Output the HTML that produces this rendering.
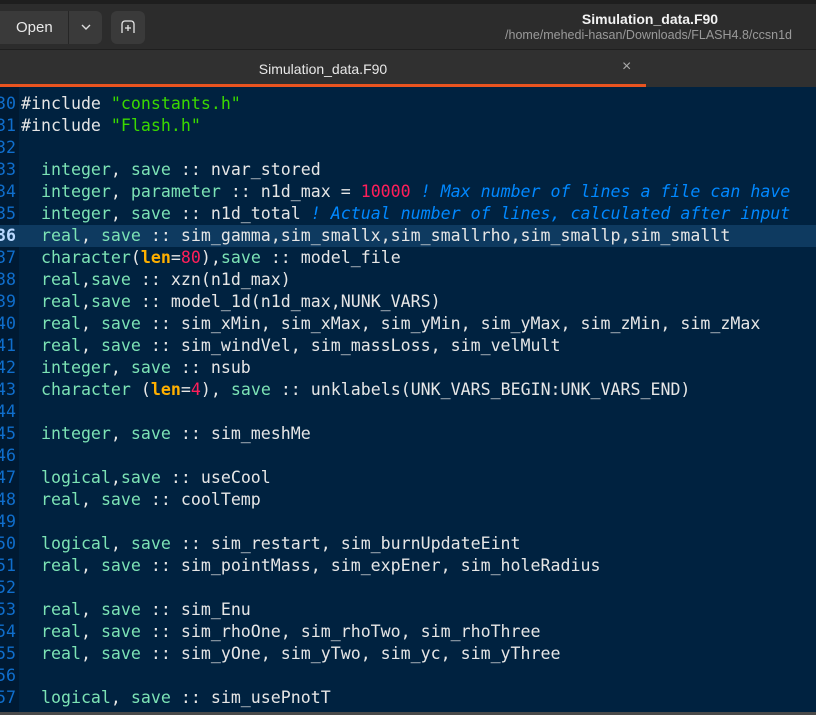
<!DOCTYPE html>
<html><head><meta charset="utf-8"><style>
*{margin:0;padding:0;box-sizing:border-box}
html,body{width:816px;height:715px;overflow:hidden}
body{background:#002240;font-family:"Liberation Sans","DejaVu Sans",sans-serif;position:relative}
#hdr{position:absolute;left:0;top:0;width:816px;height:50px;background:#2c2c2c;border-top:4px solid #1e1e1e;border-bottom:1px solid #1f1f1f}
.btn{position:absolute;top:7px;height:33px;background:#3a3a3a;border-radius:6px;color:#e8e8e8;font-size:15px;line-height:33px}
#tabs{position:absolute;left:0;top:50px;width:816px;height:37px;background:#303030}
#orange{position:absolute;left:0;top:84px;width:646px;height:3px;background:#e95420}
#wrap{position:absolute;left:0;top:87px;width:816px;height:625px;overflow:hidden}
#gut{position:absolute;left:0;top:0;width:19px;height:625px;background:#001a33}
#code{position:absolute;left:0;top:-16px;width:816px;font-family:"DejaVu Sans Mono",monospace;font-size:16.6px;white-space:normal}
.l{height:22px;line-height:22px;position:relative;color:#e6e6e6;white-space:nowrap}
.n{position:absolute;right:800px;color:#0f6ecc;width:40px;text-align:right}
.t{position:absolute;left:21px;white-space:pre}
.cur{background:#0e3a60}
.cur .n{color:#b9d8ff;font-weight:bold}
.k{color:#7ce3b5}.s{color:#3ad900}.num{color:#ff1f5a}.c{color:#0088ff;font-style:italic}.len{color:#ffb000;font-weight:bold}
#bot{position:absolute;left:0;top:712px;width:816px;height:3px;background:#4a4a4a}
</style></head><body>
<div id="hdr">
 <div class="btn" style="left:0;width:102px;border-radius:0 6px 6px 0"><span style="position:absolute;left:16px">Open</span><span style="position:absolute;left:68px;top:0;width:1px;height:33px;background:#262626"></span><svg style="position:absolute;left:80px;top:12px" width="12" height="8"><path d="M2 2l4 4 4-4" stroke="#ddd" stroke-width="1.4" fill="none"/></svg></div>
 <div class="btn" style="left:111px;width:34px"><svg style="position:absolute;left:9px;top:8px" width="16" height="16"><path d="M2 14V5a3 3 0 0 1 3-3h6a3 3 0 0 1 3 3v9M8 6v6M5 9h6" stroke="#e6e6e6" stroke-width="1.3" fill="none"/></svg></div>
 <div style="position:absolute;left:0;width:1300px;top:7px;text-align:center;color:#f2f2f2;font-weight:bold;font-size:14px">Simulation_data.F90</div>
 <div style="position:absolute;right:24px;top:24px;color:#9a9a9a;font-size:12.5px">/home/mehedi-hasan/Downloads/FLASH4.8/ccsn1d</div>
</div>
<div id="tabs"><div style="position:absolute;left:0;width:646px;top:11px;text-align:center;color:#e8e8e8;font-size:14px">Simulation_data.F90</div><div style="position:absolute;left:622px;top:8px;color:#aaa;font-size:16px">×</div></div>
<div id="wrap"><div id="gut"></div>
<div id="code"><div class="l"><span class="t" style="left:61px;top:6px;color:#ffb000">'</span></div><div class="l"><span class="n">30</span><span class="t">#include <span class="s">"constants.h"</span></span></div><div class="l"><span class="n">31</span><span class="t">#include <span class="s">"Flash.h"</span></span></div><div class="l"><span class="n">32</span></div><div class="l"><span class="n">33</span><span class="t">  <span class="k">integer</span>, <span class="k">save</span> :: nvar_stored</span></div><div class="l"><span class="n">34</span><span class="t">  <span class="k">integer</span>, <span class="k">parameter</span> :: n1d_max = <span class="num">10000</span> <span class="c">! Max number of lines a file can have</span></span></div><div class="l"><span class="n">35</span><span class="t">  <span class="k">integer</span>, <span class="k">save</span> :: n1d_total <span class="c">! Actual number of lines, calculated after input</span></span></div><div class="l cur"><span class="n">36</span><span class="t">  <span class="k">real</span>, <span class="k">save</span> :: sim_gamma,sim_smallx,sim_smallrho,sim_smallp,sim_smallt</span></div><div class="l"><span class="n">37</span><span class="t">  <span class="k">character</span>(<span class="len">len</span>=<span class="num">80</span>),<span class="k">save</span> :: model_file</span></div><div class="l"><span class="n">38</span><span class="t">  <span class="k">real</span>,<span class="k">save</span> :: xzn(n1d_max)</span></div><div class="l"><span class="n">39</span><span class="t">  <span class="k">real</span>,<span class="k">save</span> :: model_1d(n1d_max,NUNK_VARS)</span></div><div class="l"><span class="n">40</span><span class="t">  <span class="k">real</span>, <span class="k">save</span> :: sim_xMin, sim_xMax, sim_yMin, sim_yMax, sim_zMin, sim_zMax</span></div><div class="l"><span class="n">41</span><span class="t">  <span class="k">real</span>, <span class="k">save</span> :: sim_windVel, sim_massLoss, sim_velMult</span></div><div class="l"><span class="n">42</span><span class="t">  <span class="k">integer</span>, <span class="k">save</span> :: nsub</span></div><div class="l"><span class="n">43</span><span class="t">  <span class="k">character</span> (<span class="len">len</span>=<span class="num">4</span>), <span class="k">save</span> :: unklabels(UNK_VARS_BEGIN:UNK_VARS_END)</span></div><div class="l"><span class="n">44</span></div><div class="l"><span class="n">45</span><span class="t">  <span class="k">integer</span>, <span class="k">save</span> :: sim_meshMe</span></div><div class="l"><span class="n">46</span></div><div class="l"><span class="n">47</span><span class="t">  <span class="k">logical</span>,<span class="k">save</span> :: useCool</span></div><div class="l"><span class="n">48</span><span class="t">  <span class="k">real</span>, <span class="k">save</span> :: coolTemp</span></div><div class="l"><span class="n">49</span></div><div class="l"><span class="n">50</span><span class="t">  <span class="k">logical</span>, <span class="k">save</span> :: sim_restart, sim_burnUpdateEint</span></div><div class="l"><span class="n">51</span><span class="t">  <span class="k">real</span>, <span class="k">save</span> :: sim_pointMass, sim_expEner, sim_holeRadius</span></div><div class="l"><span class="n">52</span></div><div class="l"><span class="n">53</span><span class="t">  <span class="k">real</span>, <span class="k">save</span> :: sim_Enu</span></div><div class="l"><span class="n">54</span><span class="t">  <span class="k">real</span>, <span class="k">save</span> :: sim_rhoOne, sim_rhoTwo, sim_rhoThree</span></div><div class="l"><span class="n">55</span><span class="t">  <span class="k">real</span>, <span class="k">save</span> :: sim_yOne, sim_yTwo, sim_yc, sim_yThree</span></div><div class="l"><span class="n">56</span></div><div class="l"><span class="n">57</span><span class="t">  <span class="k">logical</span>, <span class="k">save</span> :: sim_usePnotT</span></div></div></div>
<div id="orange"></div>
<div id="bot"></div>
</body></html>
